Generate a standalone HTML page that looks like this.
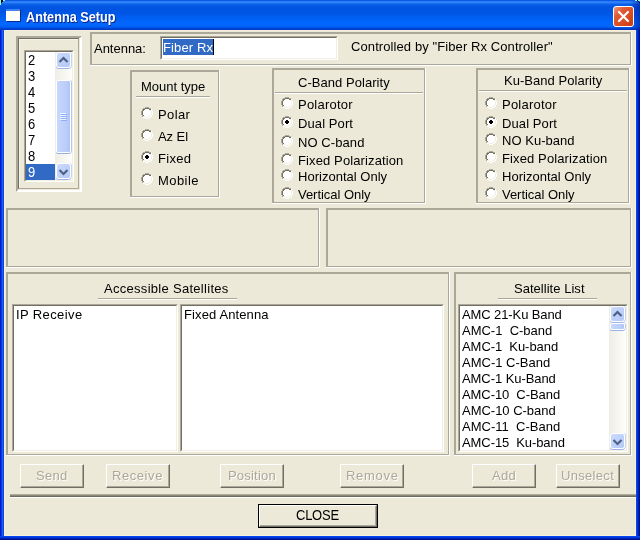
<!DOCTYPE html>
<html><head><meta charset="utf-8"><title>Antenna Setup</title>
<style>
#w{left:0;top:0;width:640px;height:540px;will-change:transform}
*,*:before,*:after{box-sizing:border-box;margin:0;padding:0}
html,body{width:640px;height:540px;overflow:hidden;background:#ece9d8}
body{position:relative;font-family:"Liberation Sans",sans-serif;font-size:13px;color:#000;line-height:16px}
.a{position:absolute}
#tb{left:0;top:0;width:640px;height:30px;background:linear-gradient(to bottom,#0043d9 0px,#1a6af0 1px,#3b8fff 2px,#2277f5 3px,#0b5fe8 4.5px,#0054e1 7px,#0055e3 13px,#0061f5 19px,#0068ff 24px,#0060f5 27px,#004bdd 28px,#0033c0 30px)}
#bl{left:0;top:30px;width:4px;height:510px;background:linear-gradient(to right,#0019cc 0,#0019cc 1px,#0a3ae0 1px,#0a3ae0 2px,#1560f0 2px,#1560f0 3px,#0548e8 3px)}
#br{left:636px;top:30px;width:4px;height:510px;background:linear-gradient(to right,#0546ee 0,#0546ee 1px,#0034dc 1px,#0034dc 2px,#001eb8 2px,#001eb8 3px,#00118c 3px)}
#bb{left:0;top:536px;width:640px;height:4px;background:linear-gradient(to bottom,#0546ee 0,#0546ee 1px,#0034dc 1px,#0034dc 2px,#001eb8 2px,#001eb8 3px,#00118c 3px)}
#ttl{color:#fff;font-weight:bold;font-size:14px;transform-origin:0 0;line-height:16px;text-shadow:1px 1px 0 #0a1883;white-space:nowrap}
#ico{left:6px;top:9px;width:14px;height:12px;background:#fffffa;border-top:2px solid #3c84f0;box-shadow:1px 1px 0 #0a2a9c}
#ico:after{content:"";position:absolute;left:12px;top:-1px;width:1px;height:1px;background:#f0682c}
.px{width:1px;height:1px}
#cx{left:613px;top:6px;width:21px;height:21px;border:1px solid #fff;border-radius:3px;background:linear-gradient(135deg,#ee977b 0%,#e05a36 30%,#d8481f 70%,#c23813 100%)}
.f{border-style:solid;border-color:#aca899;border-width:2px 0 0 2px}
.f:before{content:"";position:absolute;right:0;bottom:0;left:-2px;top:-2px;border-right:1px solid #fff;border-bottom:1px solid #fff}
.f:after{content:"";position:absolute;right:1px;bottom:1px;left:0;top:0;border-right:1px solid #aca899;border-bottom:1px solid #aca899}
.lb{background:#fff;border-style:solid;border-width:2px;border-color:#aca899 #fff #fff #aca899}
.lb:before{content:"";position:absolute;left:-1px;top:-1px;right:-1px;bottom:-1px;border-style:solid;border-width:1px;border-color:#716f64 #f1efe2 #f1efe2 #716f64}
.t{white-space:nowrap;line-height:16px;height:16px}
.ul{height:2px;border-top:1px solid #aca899;border-bottom:1px solid #fff}
.btn{width:64px;height:24px;border-style:solid;border-width:1px;border-color:#fff #716f64 #716f64 #fff}
.btn:before{content:"";position:absolute;left:0;top:0;right:0;bottom:0;border-style:solid;border-width:0 1px 1px 0;border-color:#aca899}
.dis{color:#aca899;text-shadow:1px 1px 0 #fff}
.sb{width:17px;height:17px}
.sb:before{content:"";position:absolute;left:1px;top:0;width:15px;height:16px;border:1px solid #fff;border-radius:3px;background:linear-gradient(135deg,#cbdafe,#b4c8f6);box-shadow:0 1px 0 #9db4ea,1px 0 0 #c5d3f5}
.th{width:15px;border:1px solid #fff;border-radius:2px;background:linear-gradient(to right,#c8d8fd,#bacdf9 70%,#b0c4f4);box-shadow:0 1px 0 #98b0e8,1px 0 0 #b4c6f2}
</style></head><body><div class="a" id="w">
<div class="a" id="tb"></div>
<div class="a" id="bl"></div><div class="a" id="br"></div><div class="a" id="bb"></div>
<div class="a" style="left:4px;top:30px;width:632px;height:506px;box-shadow:inset 0 0 0 1px #f7f1dc"></div>
<div class="a" id="ico"></div>
<div class="a" style="left:0;top:0;width:1px;height:5px;background:#80ffff"></div><div class="a" style="left:3px;top:0;width:2px;height:1px;background:#80ffff"></div><div class="a" style="left:1px;top:0;width:2px;height:2px;background:#000"></div><div class="a" style="left:1px;top:2px;width:1px;height:1px;background:#000"></div>
<div class="a" style="left:635px;top:0;width:2px;height:1px;background:#80ffff"></div><div class="a px" style="left:637px;top:0;background:#000"></div><div class="a px" style="left:638px;top:1px;background:#000"></div><div class="a px" style="left:639px;top:2px;background:#000"></div><div class="a" style="left:638px;top:0;width:2px;height:1px;background:#80ffff"></div><div class="a px" style="left:639px;top:1px;background:#80ffff"></div>
<div class="a" style="left:630px;top:1px;width:10px;height:29px;background:linear-gradient(to right,rgba(0,20,150,0),rgba(0,20,150,.55))"></div>
<div class="a" id="ttl" style="left:26px;top:9px;transform:scaleX(.905)">Antenna Setup</div>
<div class="a" id="cx"><svg width="19" height="19" viewBox="0 0 19 19" style="position:absolute;left:0;top:0"><path d="M5 5 L14 14 M14 5 L5 14" stroke="#fff" stroke-width="2.2" stroke-linecap="round"/></svg></div>
<div class="a" style="left:16px;top:36px;width:66px;height:156px;border-style:solid;border-color:#aca899 #fff #fff #aca899;border-width:2px"></div>
<div class="a" style="left:18px;top:38px;width:61px;height:151px;border-style:solid;border-width:1px;border-color:#716f64 #aca899 #aca899 #716f64"></div>
<div class="a" style="left:19px;top:39px;width:59px;height:149px;border-style:solid;border-width:1px 0 0 1px;border-color:#f6f4e8"></div>
<div class="a lb" style="left:24px;top:50px;width:50px;height:132px"></div>
<div class="a t" style="left:28px;top:53px;letter-spacing:0px;transform:scaleY(1.111);transform-origin:0 12px;">2</div>
<div class="a t" style="left:28px;top:69px;letter-spacing:0px;transform:scaleY(1.111);transform-origin:0 12px;">3</div>
<div class="a t" style="left:28px;top:85px;letter-spacing:0px;transform:scaleY(1.111);transform-origin:0 12px;">4</div>
<div class="a t" style="left:28px;top:101px;letter-spacing:0px;transform:scaleY(1.111);transform-origin:0 12px;">5</div>
<div class="a t" style="left:28px;top:117px;letter-spacing:0px;transform:scaleY(1.111);transform-origin:0 12px;">6</div>
<div class="a t" style="left:28px;top:133px;letter-spacing:0px;transform:scaleY(1.111);transform-origin:0 12px;">7</div>
<div class="a t" style="left:28px;top:149px;letter-spacing:0px;transform:scaleY(1.111);transform-origin:0 12px;">8</div>
<div class="a" style="left:26px;top:164px;width:29px;height:16px;background:#316ac5"></div>
<div class="a t" style="left:28px;top:165px;letter-spacing:0px;transform:scaleY(1.111);transform-origin:0 12px;color:#fff">9</div>
<div class="a" style="left:55px;top:52px;width:17px;height:128px;background:linear-gradient(to right,#eeede5,#fefefb)"></div>
<div class="a sb" style="left:55px;top:52px"><svg width="17" height="17" viewBox="0 0 17 17" style="position:absolute;left:0;top:0"><path d="M4.5 10 L8.5 6 L12.5 10" fill="none" stroke="#4d6185" stroke-width="2.2"/></svg></div>
<div class="a sb" style="left:55px;top:163px"><svg width="17" height="17" viewBox="0 0 17 17" style="position:absolute;left:0;top:0"><path d="M4.5 7 L8.5 11 L12.5 7" fill="none" stroke="#4d6185" stroke-width="2.2"/></svg></div>
<div class="a th" style="left:56px;top:80px;height:73px"><i style="position:absolute;left:3px;top:32px;width:6px;height:1px;background:#eef4fe;box-shadow:1px 1px 0 #8cb0f8"></i><i style="position:absolute;left:3px;top:34px;width:6px;height:1px;background:#eef4fe;box-shadow:1px 1px 0 #8cb0f8"></i><i style="position:absolute;left:3px;top:36px;width:6px;height:1px;background:#eef4fe;box-shadow:1px 1px 0 #8cb0f8"></i><i style="position:absolute;left:3px;top:38px;width:6px;height:1px;background:#eef4fe;box-shadow:1px 1px 0 #8cb0f8"></i></div>
<div class="a f" style="left:90px;top:32px;width:542px;height:34px"></div>
<div class="a t" style="left:94px;top:41px;letter-spacing:-0.018px;">Antenna:</div>
<div class="a lb" style="left:160px;top:36px;width:178px;height:24px"></div>
<div class="a" style="left:163px;top:39px;width:51px;height:16px;background:#316ac5;border-right:1px solid #000"></div>
<div class="a t" style="left:163px;top:40px;letter-spacing:0.114px;color:#fff">Fiber Rx</div>
<div class="a t" style="left:351px;top:39px;letter-spacing:0.093px;">Controlled by &quot;Fiber Rx Controller&quot;</div>
<div class="a f" style="left:130px;top:70px;width:90px;height:128px"></div>
<div class="a t" style="left:141px;top:79px;letter-spacing:-0.01px;">Mount type</div>
<div class="a ul" style="left:136px;top:96px;width:74px"></div>
<svg class="a" style="left:141px;top:107px" width="12" height="12" viewBox="0 0 12 12" shape-rendering="crispEdges"><path fill="#aca899" d="M4 0h4v1h-4zM2 1h2v1h-2zM8 1h2v1h-2zM1 2h1v1h-1zM1 3h1v1h-1zM0 4h1v1h-1zM0 5h1v1h-1zM0 6h1v1h-1zM0 7h1v1h-1zM1 8h1v1h-1zM1 9h1v1h-1z"/><path fill="#716f64" d="M4 1h4v1h-4zM2 2h2v1h-2zM8 2h2v1h-2zM2 3h1v1h-1zM1 4h1v1h-1zM1 5h1v1h-1zM1 6h1v1h-1zM1 7h1v1h-1zM2 8h1v1h-1z"/><path fill="#ffffff" d="M4 2h4v1h-4zM3 3h6v1h-6zM2 4h8v1h-8zM2 5h8v1h-8zM2 6h8v1h-8zM2 7h8v1h-8zM3 8h6v1h-6zM4 9h4v1h-4z"/><path fill="#ffffff" d="M10 2h1v1h-1zM10 3h1v1h-1zM11 4h1v1h-1zM11 5h1v1h-1zM11 6h1v1h-1zM11 7h1v1h-1zM10 8h1v1h-1zM10 9h1v1h-1zM2 10h2v1h-2zM8 10h2v1h-2zM4 11h4v1h-4z"/><path fill="#f1efe2" d="M9 3h1v1h-1zM10 4h1v1h-1zM10 5h1v1h-1zM10 6h1v1h-1zM10 7h1v1h-1zM9 8h1v1h-1zM2 9h2v1h-2zM8 9h2v1h-2zM4 10h4v1h-4z"/></svg>
<div class="a t" style="left:158px;top:107px;letter-spacing:0.37px;">Polar</div>
<svg class="a" style="left:141px;top:129px" width="12" height="12" viewBox="0 0 12 12" shape-rendering="crispEdges"><path fill="#aca899" d="M4 0h4v1h-4zM2 1h2v1h-2zM8 1h2v1h-2zM1 2h1v1h-1zM1 3h1v1h-1zM0 4h1v1h-1zM0 5h1v1h-1zM0 6h1v1h-1zM0 7h1v1h-1zM1 8h1v1h-1zM1 9h1v1h-1z"/><path fill="#716f64" d="M4 1h4v1h-4zM2 2h2v1h-2zM8 2h2v1h-2zM2 3h1v1h-1zM1 4h1v1h-1zM1 5h1v1h-1zM1 6h1v1h-1zM1 7h1v1h-1zM2 8h1v1h-1z"/><path fill="#ffffff" d="M4 2h4v1h-4zM3 3h6v1h-6zM2 4h8v1h-8zM2 5h8v1h-8zM2 6h8v1h-8zM2 7h8v1h-8zM3 8h6v1h-6zM4 9h4v1h-4z"/><path fill="#ffffff" d="M10 2h1v1h-1zM10 3h1v1h-1zM11 4h1v1h-1zM11 5h1v1h-1zM11 6h1v1h-1zM11 7h1v1h-1zM10 8h1v1h-1zM10 9h1v1h-1zM2 10h2v1h-2zM8 10h2v1h-2zM4 11h4v1h-4z"/><path fill="#f1efe2" d="M9 3h1v1h-1zM10 4h1v1h-1zM10 5h1v1h-1zM10 6h1v1h-1zM10 7h1v1h-1zM9 8h1v1h-1zM2 9h2v1h-2zM8 9h2v1h-2zM4 10h4v1h-4z"/></svg>
<div class="a t" style="left:158px;top:129px;letter-spacing:-0.08px;">Az El</div>
<svg class="a" style="left:141px;top:151px" width="12" height="12" viewBox="0 0 12 12" shape-rendering="crispEdges"><path fill="#aca899" d="M4 0h4v1h-4zM2 1h2v1h-2zM8 1h2v1h-2zM1 2h1v1h-1zM1 3h1v1h-1zM0 4h1v1h-1zM0 5h1v1h-1zM0 6h1v1h-1zM0 7h1v1h-1zM1 8h1v1h-1zM1 9h1v1h-1z"/><path fill="#716f64" d="M4 1h4v1h-4zM2 2h2v1h-2zM8 2h2v1h-2zM2 3h1v1h-1zM1 4h1v1h-1zM1 5h1v1h-1zM1 6h1v1h-1zM1 7h1v1h-1zM2 8h1v1h-1z"/><path fill="#ffffff" d="M4 2h4v1h-4zM3 3h6v1h-6zM2 4h3v1h-3zM7 4h3v1h-3zM2 5h2v1h-2zM8 5h2v1h-2zM2 6h2v1h-2zM8 6h2v1h-2zM2 7h3v1h-3zM7 7h3v1h-3zM3 8h6v1h-6zM4 9h4v1h-4z"/><path fill="#ffffff" d="M10 2h1v1h-1zM10 3h1v1h-1zM11 4h1v1h-1zM11 5h1v1h-1zM11 6h1v1h-1zM11 7h1v1h-1zM10 8h1v1h-1zM10 9h1v1h-1zM2 10h2v1h-2zM8 10h2v1h-2zM4 11h4v1h-4z"/><path fill="#f1efe2" d="M9 3h1v1h-1zM10 4h1v1h-1zM10 5h1v1h-1zM10 6h1v1h-1zM10 7h1v1h-1zM9 8h1v1h-1zM2 9h2v1h-2zM8 9h2v1h-2zM4 10h4v1h-4z"/><path fill="#000000" d="M5 4h2v1h-2zM4 5h4v1h-4zM4 6h4v1h-4zM5 7h2v1h-2z"/></svg>
<div class="a t" style="left:158px;top:151px;letter-spacing:0.32px;">Fixed</div>
<svg class="a" style="left:141px;top:173px" width="12" height="12" viewBox="0 0 12 12" shape-rendering="crispEdges"><path fill="#aca899" d="M4 0h4v1h-4zM2 1h2v1h-2zM8 1h2v1h-2zM1 2h1v1h-1zM1 3h1v1h-1zM0 4h1v1h-1zM0 5h1v1h-1zM0 6h1v1h-1zM0 7h1v1h-1zM1 8h1v1h-1zM1 9h1v1h-1z"/><path fill="#716f64" d="M4 1h4v1h-4zM2 2h2v1h-2zM8 2h2v1h-2zM2 3h1v1h-1zM1 4h1v1h-1zM1 5h1v1h-1zM1 6h1v1h-1zM1 7h1v1h-1zM2 8h1v1h-1z"/><path fill="#ffffff" d="M4 2h4v1h-4zM3 3h6v1h-6zM2 4h8v1h-8zM2 5h8v1h-8zM2 6h8v1h-8zM2 7h8v1h-8zM3 8h6v1h-6zM4 9h4v1h-4z"/><path fill="#ffffff" d="M10 2h1v1h-1zM10 3h1v1h-1zM11 4h1v1h-1zM11 5h1v1h-1zM11 6h1v1h-1zM11 7h1v1h-1zM10 8h1v1h-1zM10 9h1v1h-1zM2 10h2v1h-2zM8 10h2v1h-2zM4 11h4v1h-4z"/><path fill="#f1efe2" d="M9 3h1v1h-1zM10 4h1v1h-1zM10 5h1v1h-1zM10 6h1v1h-1zM10 7h1v1h-1zM9 8h1v1h-1zM2 9h2v1h-2zM8 9h2v1h-2zM4 10h4v1h-4z"/></svg>
<div class="a t" style="left:158px;top:173px;letter-spacing:0.44px;">Mobile</div>
<div class="a f" style="left:272px;top:68px;width:154px;height:136px"></div>
<div class="a t" style="left:298px;top:75px;letter-spacing:0.047px;">C-Band Polarity</div>
<div class="a ul" style="left:275px;top:92px;width:148px"></div>
<svg class="a" style="left:281px;top:97px" width="12" height="12" viewBox="0 0 12 12" shape-rendering="crispEdges"><path fill="#aca899" d="M4 0h4v1h-4zM2 1h2v1h-2zM8 1h2v1h-2zM1 2h1v1h-1zM1 3h1v1h-1zM0 4h1v1h-1zM0 5h1v1h-1zM0 6h1v1h-1zM0 7h1v1h-1zM1 8h1v1h-1zM1 9h1v1h-1z"/><path fill="#716f64" d="M4 1h4v1h-4zM2 2h2v1h-2zM8 2h2v1h-2zM2 3h1v1h-1zM1 4h1v1h-1zM1 5h1v1h-1zM1 6h1v1h-1zM1 7h1v1h-1zM2 8h1v1h-1z"/><path fill="#ffffff" d="M4 2h4v1h-4zM3 3h6v1h-6zM2 4h8v1h-8zM2 5h8v1h-8zM2 6h8v1h-8zM2 7h8v1h-8zM3 8h6v1h-6zM4 9h4v1h-4z"/><path fill="#ffffff" d="M10 2h1v1h-1zM10 3h1v1h-1zM11 4h1v1h-1zM11 5h1v1h-1zM11 6h1v1h-1zM11 7h1v1h-1zM10 8h1v1h-1zM10 9h1v1h-1zM2 10h2v1h-2zM8 10h2v1h-2zM4 11h4v1h-4z"/><path fill="#f1efe2" d="M9 3h1v1h-1zM10 4h1v1h-1zM10 5h1v1h-1zM10 6h1v1h-1zM10 7h1v1h-1zM9 8h1v1h-1zM2 9h2v1h-2zM8 9h2v1h-2zM4 10h4v1h-4z"/></svg>
<div class="a t" style="left:298px;top:97px;letter-spacing:0.22px;">Polarotor</div>
<svg class="a" style="left:281px;top:116px" width="12" height="12" viewBox="0 0 12 12" shape-rendering="crispEdges"><path fill="#aca899" d="M4 0h4v1h-4zM2 1h2v1h-2zM8 1h2v1h-2zM1 2h1v1h-1zM1 3h1v1h-1zM0 4h1v1h-1zM0 5h1v1h-1zM0 6h1v1h-1zM0 7h1v1h-1zM1 8h1v1h-1zM1 9h1v1h-1z"/><path fill="#716f64" d="M4 1h4v1h-4zM2 2h2v1h-2zM8 2h2v1h-2zM2 3h1v1h-1zM1 4h1v1h-1zM1 5h1v1h-1zM1 6h1v1h-1zM1 7h1v1h-1zM2 8h1v1h-1z"/><path fill="#ffffff" d="M4 2h4v1h-4zM3 3h6v1h-6zM2 4h3v1h-3zM7 4h3v1h-3zM2 5h2v1h-2zM8 5h2v1h-2zM2 6h2v1h-2zM8 6h2v1h-2zM2 7h3v1h-3zM7 7h3v1h-3zM3 8h6v1h-6zM4 9h4v1h-4z"/><path fill="#ffffff" d="M10 2h1v1h-1zM10 3h1v1h-1zM11 4h1v1h-1zM11 5h1v1h-1zM11 6h1v1h-1zM11 7h1v1h-1zM10 8h1v1h-1zM10 9h1v1h-1zM2 10h2v1h-2zM8 10h2v1h-2zM4 11h4v1h-4z"/><path fill="#f1efe2" d="M9 3h1v1h-1zM10 4h1v1h-1zM10 5h1v1h-1zM10 6h1v1h-1zM10 7h1v1h-1zM9 8h1v1h-1zM2 9h2v1h-2zM8 9h2v1h-2zM4 10h4v1h-4z"/><path fill="#000000" d="M5 4h2v1h-2zM4 5h4v1h-4zM4 6h4v1h-4zM5 7h2v1h-2z"/></svg>
<div class="a t" style="left:298px;top:116px;letter-spacing:0.095px;">Dual Port</div>
<svg class="a" style="left:281px;top:135px" width="12" height="12" viewBox="0 0 12 12" shape-rendering="crispEdges"><path fill="#aca899" d="M4 0h4v1h-4zM2 1h2v1h-2zM8 1h2v1h-2zM1 2h1v1h-1zM1 3h1v1h-1zM0 4h1v1h-1zM0 5h1v1h-1zM0 6h1v1h-1zM0 7h1v1h-1zM1 8h1v1h-1zM1 9h1v1h-1z"/><path fill="#716f64" d="M4 1h4v1h-4zM2 2h2v1h-2zM8 2h2v1h-2zM2 3h1v1h-1zM1 4h1v1h-1zM1 5h1v1h-1zM1 6h1v1h-1zM1 7h1v1h-1zM2 8h1v1h-1z"/><path fill="#ffffff" d="M4 2h4v1h-4zM3 3h6v1h-6zM2 4h8v1h-8zM2 5h8v1h-8zM2 6h8v1h-8zM2 7h8v1h-8zM3 8h6v1h-6zM4 9h4v1h-4z"/><path fill="#ffffff" d="M10 2h1v1h-1zM10 3h1v1h-1zM11 4h1v1h-1zM11 5h1v1h-1zM11 6h1v1h-1zM11 7h1v1h-1zM10 8h1v1h-1zM10 9h1v1h-1zM2 10h2v1h-2zM8 10h2v1h-2zM4 11h4v1h-4z"/><path fill="#f1efe2" d="M9 3h1v1h-1zM10 4h1v1h-1zM10 5h1v1h-1zM10 6h1v1h-1zM10 7h1v1h-1zM9 8h1v1h-1zM2 9h2v1h-2zM8 9h2v1h-2zM4 10h4v1h-4z"/></svg>
<div class="a t" style="left:298px;top:135px;letter-spacing:0.08px;">NO C-band</div>
<svg class="a" style="left:281px;top:153px" width="12" height="12" viewBox="0 0 12 12" shape-rendering="crispEdges"><path fill="#aca899" d="M4 0h4v1h-4zM2 1h2v1h-2zM8 1h2v1h-2zM1 2h1v1h-1zM1 3h1v1h-1zM0 4h1v1h-1zM0 5h1v1h-1zM0 6h1v1h-1zM0 7h1v1h-1zM1 8h1v1h-1zM1 9h1v1h-1z"/><path fill="#716f64" d="M4 1h4v1h-4zM2 2h2v1h-2zM8 2h2v1h-2zM2 3h1v1h-1zM1 4h1v1h-1zM1 5h1v1h-1zM1 6h1v1h-1zM1 7h1v1h-1zM2 8h1v1h-1z"/><path fill="#ffffff" d="M4 2h4v1h-4zM3 3h6v1h-6zM2 4h8v1h-8zM2 5h8v1h-8zM2 6h8v1h-8zM2 7h8v1h-8zM3 8h6v1h-6zM4 9h4v1h-4z"/><path fill="#ffffff" d="M10 2h1v1h-1zM10 3h1v1h-1zM11 4h1v1h-1zM11 5h1v1h-1zM11 6h1v1h-1zM11 7h1v1h-1zM10 8h1v1h-1zM10 9h1v1h-1zM2 10h2v1h-2zM8 10h2v1h-2zM4 11h4v1h-4z"/><path fill="#f1efe2" d="M9 3h1v1h-1zM10 4h1v1h-1zM10 5h1v1h-1zM10 6h1v1h-1zM10 7h1v1h-1zM9 8h1v1h-1zM2 9h2v1h-2zM8 9h2v1h-2zM4 10h4v1h-4z"/></svg>
<div class="a t" style="left:298px;top:153px;letter-spacing:0.118px;">Fixed Polarization</div>
<svg class="a" style="left:281px;top:169px" width="12" height="12" viewBox="0 0 12 12" shape-rendering="crispEdges"><path fill="#aca899" d="M4 0h4v1h-4zM2 1h2v1h-2zM8 1h2v1h-2zM1 2h1v1h-1zM1 3h1v1h-1zM0 4h1v1h-1zM0 5h1v1h-1zM0 6h1v1h-1zM0 7h1v1h-1zM1 8h1v1h-1zM1 9h1v1h-1z"/><path fill="#716f64" d="M4 1h4v1h-4zM2 2h2v1h-2zM8 2h2v1h-2zM2 3h1v1h-1zM1 4h1v1h-1zM1 5h1v1h-1zM1 6h1v1h-1zM1 7h1v1h-1zM2 8h1v1h-1z"/><path fill="#ffffff" d="M4 2h4v1h-4zM3 3h6v1h-6zM2 4h8v1h-8zM2 5h8v1h-8zM2 6h8v1h-8zM2 7h8v1h-8zM3 8h6v1h-6zM4 9h4v1h-4z"/><path fill="#ffffff" d="M10 2h1v1h-1zM10 3h1v1h-1zM11 4h1v1h-1zM11 5h1v1h-1zM11 6h1v1h-1zM11 7h1v1h-1zM10 8h1v1h-1zM10 9h1v1h-1zM2 10h2v1h-2zM8 10h2v1h-2zM4 11h4v1h-4z"/><path fill="#f1efe2" d="M9 3h1v1h-1zM10 4h1v1h-1zM10 5h1v1h-1zM10 6h1v1h-1zM10 7h1v1h-1zM9 8h1v1h-1zM2 9h2v1h-2zM8 9h2v1h-2zM4 10h4v1h-4z"/></svg>
<div class="a t" style="left:298px;top:169px;letter-spacing:0.014px;">Horizontal Only</div>
<svg class="a" style="left:281px;top:187px" width="12" height="12" viewBox="0 0 12 12" shape-rendering="crispEdges"><path fill="#aca899" d="M4 0h4v1h-4zM2 1h2v1h-2zM8 1h2v1h-2zM1 2h1v1h-1zM1 3h1v1h-1zM0 4h1v1h-1zM0 5h1v1h-1zM0 6h1v1h-1zM0 7h1v1h-1zM1 8h1v1h-1zM1 9h1v1h-1z"/><path fill="#716f64" d="M4 1h4v1h-4zM2 2h2v1h-2zM8 2h2v1h-2zM2 3h1v1h-1zM1 4h1v1h-1zM1 5h1v1h-1zM1 6h1v1h-1zM1 7h1v1h-1zM2 8h1v1h-1z"/><path fill="#ffffff" d="M4 2h4v1h-4zM3 3h6v1h-6zM2 4h8v1h-8zM2 5h8v1h-8zM2 6h8v1h-8zM2 7h8v1h-8zM3 8h6v1h-6zM4 9h4v1h-4z"/><path fill="#ffffff" d="M10 2h1v1h-1zM10 3h1v1h-1zM11 4h1v1h-1zM11 5h1v1h-1zM11 6h1v1h-1zM11 7h1v1h-1zM10 8h1v1h-1zM10 9h1v1h-1zM2 10h2v1h-2zM8 10h2v1h-2zM4 11h4v1h-4z"/><path fill="#f1efe2" d="M9 3h1v1h-1zM10 4h1v1h-1zM10 5h1v1h-1zM10 6h1v1h-1zM10 7h1v1h-1zM9 8h1v1h-1zM2 9h2v1h-2zM8 9h2v1h-2zM4 10h4v1h-4z"/></svg>
<div class="a t" style="left:298px;top:187px;letter-spacing:-0.037px;">Vertical Only</div>
<div class="a f" style="left:476px;top:68px;width:154px;height:136px"></div>
<div class="a t" style="left:504px;top:73px;letter-spacing:0.044px;">Ku-Band Polarity</div>
<div class="a ul" style="left:479px;top:90px;width:148px"></div>
<svg class="a" style="left:485px;top:97px" width="12" height="12" viewBox="0 0 12 12" shape-rendering="crispEdges"><path fill="#aca899" d="M4 0h4v1h-4zM2 1h2v1h-2zM8 1h2v1h-2zM1 2h1v1h-1zM1 3h1v1h-1zM0 4h1v1h-1zM0 5h1v1h-1zM0 6h1v1h-1zM0 7h1v1h-1zM1 8h1v1h-1zM1 9h1v1h-1z"/><path fill="#716f64" d="M4 1h4v1h-4zM2 2h2v1h-2zM8 2h2v1h-2zM2 3h1v1h-1zM1 4h1v1h-1zM1 5h1v1h-1zM1 6h1v1h-1zM1 7h1v1h-1zM2 8h1v1h-1z"/><path fill="#ffffff" d="M4 2h4v1h-4zM3 3h6v1h-6zM2 4h8v1h-8zM2 5h8v1h-8zM2 6h8v1h-8zM2 7h8v1h-8zM3 8h6v1h-6zM4 9h4v1h-4z"/><path fill="#ffffff" d="M10 2h1v1h-1zM10 3h1v1h-1zM11 4h1v1h-1zM11 5h1v1h-1zM11 6h1v1h-1zM11 7h1v1h-1zM10 8h1v1h-1zM10 9h1v1h-1zM2 10h2v1h-2zM8 10h2v1h-2zM4 11h4v1h-4z"/><path fill="#f1efe2" d="M9 3h1v1h-1zM10 4h1v1h-1zM10 5h1v1h-1zM10 6h1v1h-1zM10 7h1v1h-1zM9 8h1v1h-1zM2 9h2v1h-2zM8 9h2v1h-2zM4 10h4v1h-4z"/></svg>
<div class="a t" style="left:502px;top:97px;letter-spacing:0.22px;">Polarotor</div>
<svg class="a" style="left:485px;top:116px" width="12" height="12" viewBox="0 0 12 12" shape-rendering="crispEdges"><path fill="#aca899" d="M4 0h4v1h-4zM2 1h2v1h-2zM8 1h2v1h-2zM1 2h1v1h-1zM1 3h1v1h-1zM0 4h1v1h-1zM0 5h1v1h-1zM0 6h1v1h-1zM0 7h1v1h-1zM1 8h1v1h-1zM1 9h1v1h-1z"/><path fill="#716f64" d="M4 1h4v1h-4zM2 2h2v1h-2zM8 2h2v1h-2zM2 3h1v1h-1zM1 4h1v1h-1zM1 5h1v1h-1zM1 6h1v1h-1zM1 7h1v1h-1zM2 8h1v1h-1z"/><path fill="#ffffff" d="M4 2h4v1h-4zM3 3h6v1h-6zM2 4h3v1h-3zM7 4h3v1h-3zM2 5h2v1h-2zM8 5h2v1h-2zM2 6h2v1h-2zM8 6h2v1h-2zM2 7h3v1h-3zM7 7h3v1h-3zM3 8h6v1h-6zM4 9h4v1h-4z"/><path fill="#ffffff" d="M10 2h1v1h-1zM10 3h1v1h-1zM11 4h1v1h-1zM11 5h1v1h-1zM11 6h1v1h-1zM11 7h1v1h-1zM10 8h1v1h-1zM10 9h1v1h-1zM2 10h2v1h-2zM8 10h2v1h-2zM4 11h4v1h-4z"/><path fill="#f1efe2" d="M9 3h1v1h-1zM10 4h1v1h-1zM10 5h1v1h-1zM10 6h1v1h-1zM10 7h1v1h-1zM9 8h1v1h-1zM2 9h2v1h-2zM8 9h2v1h-2zM4 10h4v1h-4z"/><path fill="#000000" d="M5 4h2v1h-2zM4 5h4v1h-4zM4 6h4v1h-4zM5 7h2v1h-2z"/></svg>
<div class="a t" style="left:502px;top:116px;letter-spacing:0.095px;">Dual Port</div>
<svg class="a" style="left:485px;top:133px" width="12" height="12" viewBox="0 0 12 12" shape-rendering="crispEdges"><path fill="#aca899" d="M4 0h4v1h-4zM2 1h2v1h-2zM8 1h2v1h-2zM1 2h1v1h-1zM1 3h1v1h-1zM0 4h1v1h-1zM0 5h1v1h-1zM0 6h1v1h-1zM0 7h1v1h-1zM1 8h1v1h-1zM1 9h1v1h-1z"/><path fill="#716f64" d="M4 1h4v1h-4zM2 2h2v1h-2zM8 2h2v1h-2zM2 3h1v1h-1zM1 4h1v1h-1zM1 5h1v1h-1zM1 6h1v1h-1zM1 7h1v1h-1zM2 8h1v1h-1z"/><path fill="#ffffff" d="M4 2h4v1h-4zM3 3h6v1h-6zM2 4h8v1h-8zM2 5h8v1h-8zM2 6h8v1h-8zM2 7h8v1h-8zM3 8h6v1h-6zM4 9h4v1h-4z"/><path fill="#ffffff" d="M10 2h1v1h-1zM10 3h1v1h-1zM11 4h1v1h-1zM11 5h1v1h-1zM11 6h1v1h-1zM11 7h1v1h-1zM10 8h1v1h-1zM10 9h1v1h-1zM2 10h2v1h-2zM8 10h2v1h-2zM4 11h4v1h-4z"/><path fill="#f1efe2" d="M9 3h1v1h-1zM10 4h1v1h-1zM10 5h1v1h-1zM10 6h1v1h-1zM10 7h1v1h-1zM9 8h1v1h-1zM2 9h2v1h-2zM8 9h2v1h-2zM4 10h4v1h-4z"/></svg>
<div class="a t" style="left:502px;top:133px;letter-spacing:0.034px;">NO Ku-band</div>
<svg class="a" style="left:485px;top:151px" width="12" height="12" viewBox="0 0 12 12" shape-rendering="crispEdges"><path fill="#aca899" d="M4 0h4v1h-4zM2 1h2v1h-2zM8 1h2v1h-2zM1 2h1v1h-1zM1 3h1v1h-1zM0 4h1v1h-1zM0 5h1v1h-1zM0 6h1v1h-1zM0 7h1v1h-1zM1 8h1v1h-1zM1 9h1v1h-1z"/><path fill="#716f64" d="M4 1h4v1h-4zM2 2h2v1h-2zM8 2h2v1h-2zM2 3h1v1h-1zM1 4h1v1h-1zM1 5h1v1h-1zM1 6h1v1h-1zM1 7h1v1h-1zM2 8h1v1h-1z"/><path fill="#ffffff" d="M4 2h4v1h-4zM3 3h6v1h-6zM2 4h8v1h-8zM2 5h8v1h-8zM2 6h8v1h-8zM2 7h8v1h-8zM3 8h6v1h-6zM4 9h4v1h-4z"/><path fill="#ffffff" d="M10 2h1v1h-1zM10 3h1v1h-1zM11 4h1v1h-1zM11 5h1v1h-1zM11 6h1v1h-1zM11 7h1v1h-1zM10 8h1v1h-1zM10 9h1v1h-1zM2 10h2v1h-2zM8 10h2v1h-2zM4 11h4v1h-4z"/><path fill="#f1efe2" d="M9 3h1v1h-1zM10 4h1v1h-1zM10 5h1v1h-1zM10 6h1v1h-1zM10 7h1v1h-1zM9 8h1v1h-1zM2 9h2v1h-2zM8 9h2v1h-2zM4 10h4v1h-4z"/></svg>
<div class="a t" style="left:502px;top:151px;letter-spacing:0.118px;">Fixed Polarization</div>
<svg class="a" style="left:485px;top:169px" width="12" height="12" viewBox="0 0 12 12" shape-rendering="crispEdges"><path fill="#aca899" d="M4 0h4v1h-4zM2 1h2v1h-2zM8 1h2v1h-2zM1 2h1v1h-1zM1 3h1v1h-1zM0 4h1v1h-1zM0 5h1v1h-1zM0 6h1v1h-1zM0 7h1v1h-1zM1 8h1v1h-1zM1 9h1v1h-1z"/><path fill="#716f64" d="M4 1h4v1h-4zM2 2h2v1h-2zM8 2h2v1h-2zM2 3h1v1h-1zM1 4h1v1h-1zM1 5h1v1h-1zM1 6h1v1h-1zM1 7h1v1h-1zM2 8h1v1h-1z"/><path fill="#ffffff" d="M4 2h4v1h-4zM3 3h6v1h-6zM2 4h8v1h-8zM2 5h8v1h-8zM2 6h8v1h-8zM2 7h8v1h-8zM3 8h6v1h-6zM4 9h4v1h-4z"/><path fill="#ffffff" d="M10 2h1v1h-1zM10 3h1v1h-1zM11 4h1v1h-1zM11 5h1v1h-1zM11 6h1v1h-1zM11 7h1v1h-1zM10 8h1v1h-1zM10 9h1v1h-1zM2 10h2v1h-2zM8 10h2v1h-2zM4 11h4v1h-4z"/><path fill="#f1efe2" d="M9 3h1v1h-1zM10 4h1v1h-1zM10 5h1v1h-1zM10 6h1v1h-1zM10 7h1v1h-1zM9 8h1v1h-1zM2 9h2v1h-2zM8 9h2v1h-2zM4 10h4v1h-4z"/></svg>
<div class="a t" style="left:502px;top:169px;letter-spacing:0.014px;">Horizontal Only</div>
<svg class="a" style="left:485px;top:187px" width="12" height="12" viewBox="0 0 12 12" shape-rendering="crispEdges"><path fill="#aca899" d="M4 0h4v1h-4zM2 1h2v1h-2zM8 1h2v1h-2zM1 2h1v1h-1zM1 3h1v1h-1zM0 4h1v1h-1zM0 5h1v1h-1zM0 6h1v1h-1zM0 7h1v1h-1zM1 8h1v1h-1zM1 9h1v1h-1z"/><path fill="#716f64" d="M4 1h4v1h-4zM2 2h2v1h-2zM8 2h2v1h-2zM2 3h1v1h-1zM1 4h1v1h-1zM1 5h1v1h-1zM1 6h1v1h-1zM1 7h1v1h-1zM2 8h1v1h-1z"/><path fill="#ffffff" d="M4 2h4v1h-4zM3 3h6v1h-6zM2 4h8v1h-8zM2 5h8v1h-8zM2 6h8v1h-8zM2 7h8v1h-8zM3 8h6v1h-6zM4 9h4v1h-4z"/><path fill="#ffffff" d="M10 2h1v1h-1zM10 3h1v1h-1zM11 4h1v1h-1zM11 5h1v1h-1zM11 6h1v1h-1zM11 7h1v1h-1zM10 8h1v1h-1zM10 9h1v1h-1zM2 10h2v1h-2zM8 10h2v1h-2zM4 11h4v1h-4z"/><path fill="#f1efe2" d="M9 3h1v1h-1zM10 4h1v1h-1zM10 5h1v1h-1zM10 6h1v1h-1zM10 7h1v1h-1zM9 8h1v1h-1zM2 9h2v1h-2zM8 9h2v1h-2zM4 10h4v1h-4z"/></svg>
<div class="a t" style="left:502px;top:187px;letter-spacing:-0.037px;">Vertical Only</div>
<div class="a f" style="left:6px;top:208px;width:314px;height:60px"></div>
<div class="a f" style="left:326px;top:208px;width:306px;height:60px"></div>
<div class="a f" style="left:6px;top:272px;width:444px;height:184px"></div>
<div class="a t" style="left:104px;top:281px;letter-spacing:0.29px;">Accessible Satellites</div>
<div class="a ul" style="left:98px;top:298px;width:139px"></div>
<div class="a lb" style="left:12px;top:304px;width:166px;height:148px"></div>
<div class="a t" style="left:16px;top:307px;letter-spacing:0.389px;">IP Receive</div>
<div class="a lb" style="left:180px;top:304px;width:264px;height:148px"></div>
<div class="a t" style="left:184px;top:307px;letter-spacing:0.117px;">Fixed Antenna</div>
<div class="a f" style="left:454px;top:272px;width:178px;height:184px"></div>
<div class="a t" style="left:514px;top:281px;letter-spacing:0.031px;">Satellite List</div>
<div class="a ul" style="left:498px;top:298px;width:99px"></div>
<div class="a lb" style="left:458px;top:304px;width:170px;height:148px"></div>
<div class="a t" style="left:462px;top:307px;letter-spacing:-0.101px;">AMC 21-Ku Band</div>
<div class="a t" style="left:462px;top:323px;letter-spacing:-0.005px;">AMC-1&nbsp; C-band</div>
<div class="a t" style="left:462px;top:339px;letter-spacing:-0.052px;">AMC-1&nbsp; Ku-band</div>
<div class="a t" style="left:462px;top:355px;letter-spacing:-0.002px;">AMC-1 C-Band</div>
<div class="a t" style="left:462px;top:371px;letter-spacing:-0.067px;">AMC-1 Ku-Band</div>
<div class="a t" style="left:462px;top:387px;letter-spacing:-0.067px;">AMC-10&nbsp; C-Band</div>
<div class="a t" style="left:462px;top:403px;letter-spacing:-0.017px;">AMC-10 C-band</div>
<div class="a t" style="left:462px;top:419px;letter-spacing:0.009px;">AMC-11&nbsp; C-Band</div>
<div class="a t" style="left:462px;top:435px;letter-spacing:-0.085px;">AMC-15&nbsp; Ku-band</div>
<div class="a" style="left:609px;top:306px;width:17px;height:144px;background:linear-gradient(to right,#eeede5,#fefefb)"></div>
<div class="a sb" style="left:609px;top:306px"><svg width="17" height="17" viewBox="0 0 17 17" style="position:absolute;left:0;top:0"><path d="M4.5 10 L8.5 6 L12.5 10" fill="none" stroke="#4d6185" stroke-width="2.2"/></svg></div>
<div class="a sb" style="left:609px;top:433px"><svg width="17" height="17" viewBox="0 0 17 17" style="position:absolute;left:0;top:0"><path d="M4.5 7 L8.5 11 L12.5 7" fill="none" stroke="#4d6185" stroke-width="2.2"/></svg></div>
<div class="a th" style="left:610px;top:323px;height:7px"></div>
<div class="a btn" style="left:20px;top:464px"></div>
<div class="a btn" style="left:106px;top:464px"></div>
<div class="a btn" style="left:220px;top:464px"></div>
<div class="a btn" style="left:340px;top:464px"></div>
<div class="a btn" style="left:472px;top:464px"></div>
<div class="a btn" style="left:556px;top:464px"></div>
<div class="a t dis" style="left:36px;top:468px;letter-spacing:0.267px;">Send</div>
<div class="a t dis" style="left:112px;top:468px;letter-spacing:0.567px;">Receive</div>
<div class="a t dis" style="left:228px;top:468px;letter-spacing:0.2px;">Position</div>
<div class="a t dis" style="left:346px;top:468px;letter-spacing:0.72px;">Remove</div>
<div class="a t dis" style="left:492px;top:468px;letter-spacing:0.3px;">Add</div>
<div class="a t dis" style="left:561px;top:468px;letter-spacing:0.315px;">Unselect</div>
<div class="a" style="left:10px;top:494px;width:626px;height:4px;background:linear-gradient(to bottom,#b0ac9b 0,#b0ac9b 1px,#8b8878 1px,#8b8878 2px,#6e6c5d 2px,#6e6c5d 3px,#fff 3px)"></div>
<div class="a" style="left:258px;top:504px;width:120px;height:24px;border:1px solid #000"></div>
<div class="a btn" style="left:259px;top:505px;width:118px;height:22px"></div>
<div class="a t" style="left:296px;top:508px;letter-spacing:-0.25px;transform:scaleY(1.111);transform-origin:0 12px">CLOSE</div>
</div></body></html>
